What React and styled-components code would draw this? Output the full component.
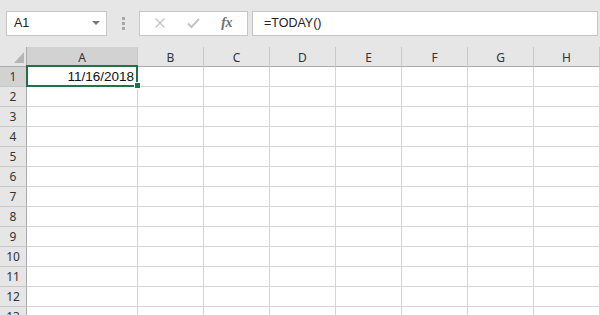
import styled, { createGlobalStyle } from "styled-components";

const GlobalStyle = createGlobalStyle`
  html, body {
    margin: 0;
    padding: 0;
    background: #ffffff;
    overflow: hidden;
  }
  body {
    width: 600px;
    height: 315px;
    font-family: "Liberation Sans", Arial, sans-serif;
  }
`;

const Window = styled.div`
  width: 600px;
  height: 315px;
  overflow: hidden;
  background: #e6e6e6;
`;

const Toolbar = styled.div`
  display: flex;
  align-items: center;
  height: 47px;
  padding: 0 2px 0 6px;
  box-sizing: border-box;
`;

const Box = styled.div`
  display: flex;
  align-items: center;
  box-sizing: border-box;
  height: 25px;
  margin-bottom: 1px;
  background: #ffffff;
  border: 1px solid #c6c6c6;
  width: ${(p) => p.$width}px;
  flex: ${(p) => (p.$grow ? 1 : "none")};
  margin-left: ${(p) => p.$gap || 0}px;
`;

const NameText = styled.span`
  flex: 1;
  padding-left: 7px;
  font-size: 12.5px;
  color: #222;
`;

const Arrow = styled.span`
  width: 0;
  height: 0;
  margin-right: 6px;
  border-left: 4px solid transparent;
  border-right: 4px solid transparent;
  border-top: 4px solid #767676;
`;

const Dots = styled.div`
  display: flex;
  flex-direction: column;
  gap: 2px;
  margin: 0 14px 0 15px;
  span {
    width: 3px;
    height: 3px;
    background: #a8a8a8;
  }
`;

const FxButtons = styled.div`
  display: flex;
  align-items: center;
  justify-content: space-between;
  width: 100%;
  padding: 0 15px 0 14px;
  box-sizing: border-box;
`;

const Fx = styled.span`
  font-family: "Liberation Serif", "Times New Roman", serif;
  font-style: italic;
  font-weight: bold;
  font-size: 14px;
  color: #707070;
  letter-spacing: -0.5px;
`;

const FormulaText = styled.span`
  padding-left: 11px;
  font-size: 12.5px;
  color: #222;
`;

const Sheet = styled.div`
  display: grid;
  grid-template-columns: 27px 111px repeat(7, 66px) 1fr;
  grid-auto-rows: 20px;
  background: #ffffff;
`;

const HeadCell = styled.div`
  box-sizing: border-box;
  display: flex;
  align-items: center;
  justify-content: center;
  background: ${(p) => (p.$active ? "#d2d2d2" : "#e6e6e6")};
  border-right: 1px solid #c8c8c8;
  border-bottom: 1px solid #ababab;
  font-family: "Noto Sans", "Liberation Sans", sans-serif;
  font-size: 12px;
  color: #333;
  padding-top: 1px;
`;

const Corner = styled.div`
  box-sizing: border-box;
  display: flex;
  align-items: flex-end;
  justify-content: flex-end;
  padding: 0 2px 3px 0;
  background: #e6e6e6;
  border-right: 1px solid #ababab;
  border-bottom: 1px solid #ababab;
`;

const RowHead = styled.div`
  box-sizing: border-box;
  display: flex;
  align-items: center;
  justify-content: center;
  background: ${(p) => (p.$active ? "#d2d2d2" : "#e6e6e6")};
  border-right: 1px solid #ababab;
  border-bottom: 1px solid #c8c8c8;
  font-family: "Noto Sans", "Liberation Sans", sans-serif;
  font-size: 12px;
  color: #333;
`;

const Cell = styled.div`
  position: relative;
  box-sizing: border-box;
  display: flex;
  align-items: center;
  justify-content: flex-end;
  padding-right: 3px;
  border-right: 1px solid #d4d4d4;
  border-bottom: 1px solid #d4d4d4;
  font-size: 13.5px;
  color: #111;
  z-index: ${(p) => (p.$selected ? 2 : 0)};
`;

const Selection = styled.div`
  position: absolute;
  left: -1px;
  top: -2px;
  width: 112px;
  height: 22px;
  box-sizing: border-box;
  border: 2px solid #217346;
  pointer-events: none;
`;

const FillHandle = styled.div`
  position: absolute;
  right: -5px;
  bottom: -4px;
  width: 5px;
  height: 5px;
  background: #217346;
  border: 1px solid #ffffff;
`;

const columns = ["A", "B", "C", "D", "E", "F", "G", "H"];
const rows = Array.from({ length: 13 }, (_, i) => i + 1);

function CrossIcon() {
  return (
    <svg width="12" height="12" viewBox="0 0 12 12">
      <path d="M1.5 1.5 L10.5 10.5 M10.5 1.5 L1.5 10.5" stroke="#c4c4c4" strokeWidth="1.4" fill="none" />
    </svg>
  );
}

function CheckIcon() {
  return (
    <svg width="13" height="12" viewBox="0 0 13 12">
      <path d="M1 6.5 L4.5 10 L12 2" stroke="#c4c4c4" strokeWidth="2" fill="none" />
    </svg>
  );
}

function CornerTriangle() {
  return (
    <svg width="10" height="11" viewBox="0 0 10 11">
      <polygon points="10,0 10,11 0,11" fill="#b6b6b6" />
    </svg>
  );
}

function Row({ r }) {
  return (
    <>
      <RowHead $active={r === 1}>{r}</RowHead>
      {columns.map((c) => {
        const selected = r === 1 && c === "A";
        return (
          <Cell key={c} $selected={selected}>
            {selected && "11/16/2018"}
            {selected && (
              <Selection>
                <FillHandle />
              </Selection>
            )}
          </Cell>
        );
      })}
      <Cell />
    </>
  );
}

export default function App() {
  return (
    <Window>
      <GlobalStyle />
      <Toolbar>
        <Box $width={101}>
          <NameText>A1</NameText>
          <Arrow />
        </Box>
        <Dots>
          <span />
          <span />
          <span />
        </Dots>
        <Box $width={109}>
          <FxButtons>
            <CrossIcon />
            <CheckIcon />
            <Fx>fx</Fx>
          </FxButtons>
        </Box>
        <Box $grow $gap={4}>
          <FormulaText>=TODAY()</FormulaText>
        </Box>
      </Toolbar>

      <Sheet>
        <Corner>
          <CornerTriangle />
        </Corner>
        {columns.map((c) => (
          <HeadCell key={c} $active={c === "A"}>
            {c}
          </HeadCell>
        ))}
        <HeadCell />

        {rows.map((r) => (
          <Row key={r} r={r} />
        ))}
      </Sheet>
    </Window>
  );
}
